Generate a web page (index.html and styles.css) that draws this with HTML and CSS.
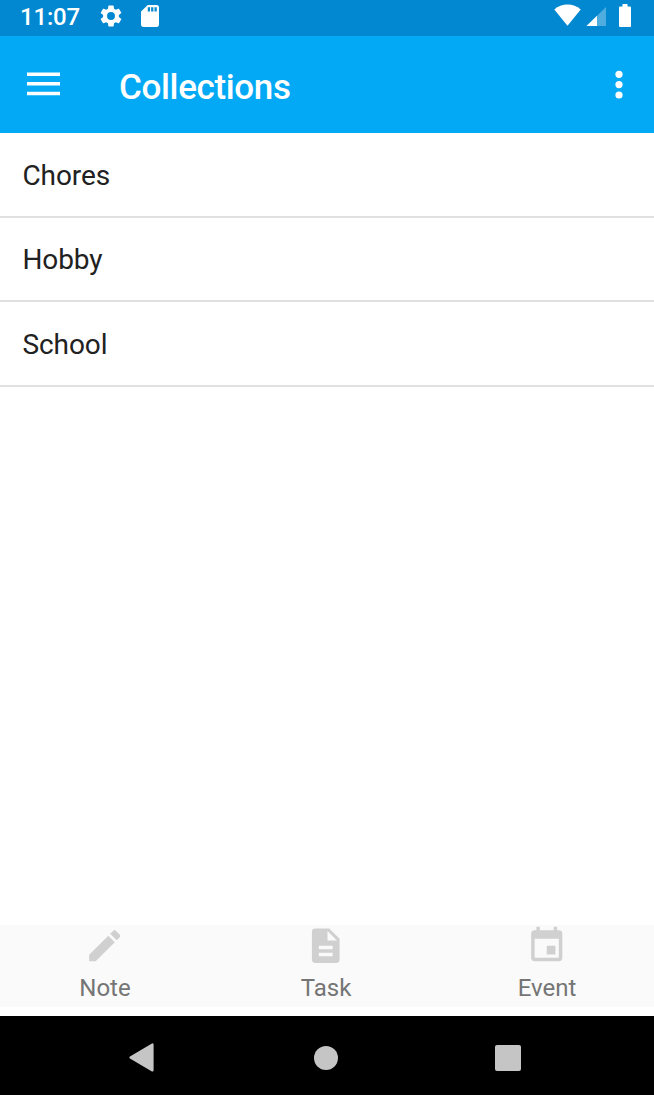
FILE: index.html
```html
<!DOCTYPE html>
<html lang="en">
<head>
<meta charset="utf-8">
<title>Collections</title>
<link rel="stylesheet" href="styles.css">
</head>
<body>
<div class="screen">
  <div class="status">
    <span class="clock">11:07</span>
    <svg class="gear" viewBox="2 2 20 20"><path d="M19.14 12.94c.04-.3.06-.61.06-.94 0-.32-.02-.64-.07-.94l2.03-1.58a.49.49 0 0 0 .12-.61l-1.92-3.32a.49.49 0 0 0-.59-.22l-2.39.96a7 7 0 0 0-1.62-.94l-.36-2.54a.48.48 0 0 0-.48-.41h-3.84a.47.47 0 0 0-.47.41l-.36 2.54c-.59.24-1.13.57-1.62.94l-2.39-.96a.48.48 0 0 0-.59.22L2.74 8.87a.47.47 0 0 0 .12.61l2.03 1.58c-.05.3-.09.63-.09.94s.02.64.07.94l-2.03 1.58a.49.49 0 0 0-.12.61l1.92 3.32c.12.22.37.29.59.22l2.39-.96c.5.38 1.03.7 1.62.94l.36 2.54c.05.24.24.41.48.41h3.84c.24 0 .44-.17.47-.41l.36-2.54a7 7 0 0 0 1.62-.94l2.39.96c.22.08.47 0 .59-.22l1.92-3.32a.47.47 0 0 0-.12-.61zM12 15.6a3.6 3.6 0 1 1 0-7.2 3.6 3.6 0 0 1 0 7.2z"/></svg>
    <svg class="sdcard" viewBox="4 2 16 20" preserveAspectRatio="none"><path d="M18 2h-8L4.02 8 4 20c0 1.100.9 2 2 2h12c1.100 0 2-.9 2-2V4c0-1.100-.9-2-2-2zm-6 6h-2V4h2zm3 0h-2V4h2zm3 0h-2V4h2z"/></svg>
    <span class="spacer"></span>
    <svg class="wifi" viewBox="0 0 27 22"><path d="M13.500 21.800.3 5.400C4 2 8.400.4 13.500.4S23 2 26.700 5.400z"/></svg>
    <svg class="signal" viewBox="0 0 20 20" preserveAspectRatio="none"><path d="M20 0v20H0z" opacity=".3"/><path d="M11 9v11H0z"/></svg>
    <svg class="battery" viewBox="0 0 12 23"><path d="M3.500 0h5v2.500H11a1 1 0 0 1 1 1V22a1 1 0 0 1-1 1H1a1 1 0 0 1-1-1V3.500a1 1 0 0 1 1-1h2.500z"/></svg>
  </div>
  <header class="appbar">
    <svg class="menu" viewBox="0 0 33 24"><path d="M0 .500h33V4H0zM0 10h33v3.500H0zM0 19.700h33v3.500H0z"/></svg>
    <h1 class="title">Collections</h1>
    <svg class="more" viewBox="0 0 8 29"><circle cx="4" cy="4.300" r="3.600"/><circle cx="4" cy="14.600" r="3.600"/><circle cx="4" cy="25" r="3.600"/></svg>
  </header>
  <ul class="list">
    <li class="row">Chores</li>
    <li class="row">Hobby</li>
    <li class="row">School</li>
  </ul>
  <nav class="tabs">
    <div class="tab"><svg class="icon" viewBox="0 0 24 24"><path d="M3 17.250V21h3.750L17.810 9.940l-3.750-3.750zM20.710 7.040a1 1 0 0 0 0-1.410l-2.340-2.340a1 1 0 0 0-1.410 0l-1.830 1.830 3.750 3.750z"/></svg><span>Note</span></div>
    <div class="tab"><svg class="icon" viewBox="0 0 24 24"><path d="M14 2H6a2 2 0 0 0-2 2v16a2 2 0 0 0 2 2h12a2 2 0 0 0 2-2V8zm2 16H8v-2h8zm0-4H8v-2h8zm-3-5V3.500L18.500 9z"/></svg><span>Task</span></div>
    <div class="tab"><svg class="icon" viewBox="0 0 24 24"><path d="M17 12h-5v5h5zM16 1v2H8V1H6v2H5a2 2 0 0 0-2 2v14a2 2 0 0 0 2 2h14a2 2 0 0 0 2-2V5a2 2 0 0 0-2-2h-1V1zm3 18H5V8h14z"/></svg><span>Event</span></div>
  </nav>
  <div class="system">
    <svg class="back" viewBox="0 0 26 29"><path d="M24.500 1.500v26l-22-13z" stroke="#c5c5c5" stroke-width="2.200" stroke-linejoin="round"/></svg>
    <span class="home"></span>
    <span class="recent"></span>
  </div>
</div>
</body>
</html>
```
FILE: styles.css
```css
* { box-sizing: border-box; }
body { margin: 0; font-family: Roboto, "Liberation Sans", sans-serif; background: #fff; }
svg { display: block; flex: none; fill: currentColor; }
.screen { width: 654px; height: 1095px; display: flex; flex-direction: column; overflow: hidden; }
.status { height: 36px; flex: none; display: flex; align-items: flex-start; padding: 4px 23px 0 20px; background: #0288d1; color: #fff; }
.clock { width: 80.400px; font-size: 24px; line-height: 26px; font-weight: 500; letter-spacing: -.2px; }
.gear { width: 22px; height: 22px; margin-top: 1px; }
.sdcard { width: 18px; height: 22px; margin: .7px 0 0 18.200px; }
.spacer { flex: 1; }
.wifi { width: 27px; height: 22px; }
.signal { width: 20px; height: 19.500px; margin: 2.500px 13px 0 5px; }
.battery { width: 12px; height: 23px; }
.appbar { height: 97px; flex: none; display: flex; padding: 0 31px 0 27px; background: #03a9f4; color: #fff; }
.menu { width: 33px; height: 24px; margin-top: 36px; }
.title { margin: 32px 0 0 59px; flex: 1; font-size: 35px; line-height: 40px; font-weight: 500; letter-spacing: -.35px; }
.more { width: 8px; height: 29px; margin-top: 34px; }
.list { margin: 0; padding: 0; list-style: none; flex: 1; }
.row { height: 84.500px; display: flex; align-items: center; padding: 2px 0 0 22.500px; border-bottom: 2px solid #e0e0e0; font-size: 28px; letter-spacing: -.1px; color: #212121; }
.tabs { height: 82.500px; flex: none; display: grid; grid-template-columns: 210px 232px 210px; margin-bottom: 9px; background: #fafafa; color: #757575; }
.tab { display: flex; flex-direction: column; align-items: center; font-size: 24px; line-height: 28px; }
.icon { width: 41.500px; height: 41.500px; margin-bottom: 8px; color: #d0d0d0; }
.system { height: 79px; flex: none; display: flex; align-items: center; padding: 4px 0 0 128px; background: #000; color: #c5c5c5; }
.back { width: 26px; height: 29px; }
.home { width: 24px; height: 24px; margin-left: 160px; border-radius: 50%; background: #c5c5c5; }
.recent { width: 26px; height: 26px; margin-left: 157px; border-radius: 2px; background: #c5c5c5; }
```
